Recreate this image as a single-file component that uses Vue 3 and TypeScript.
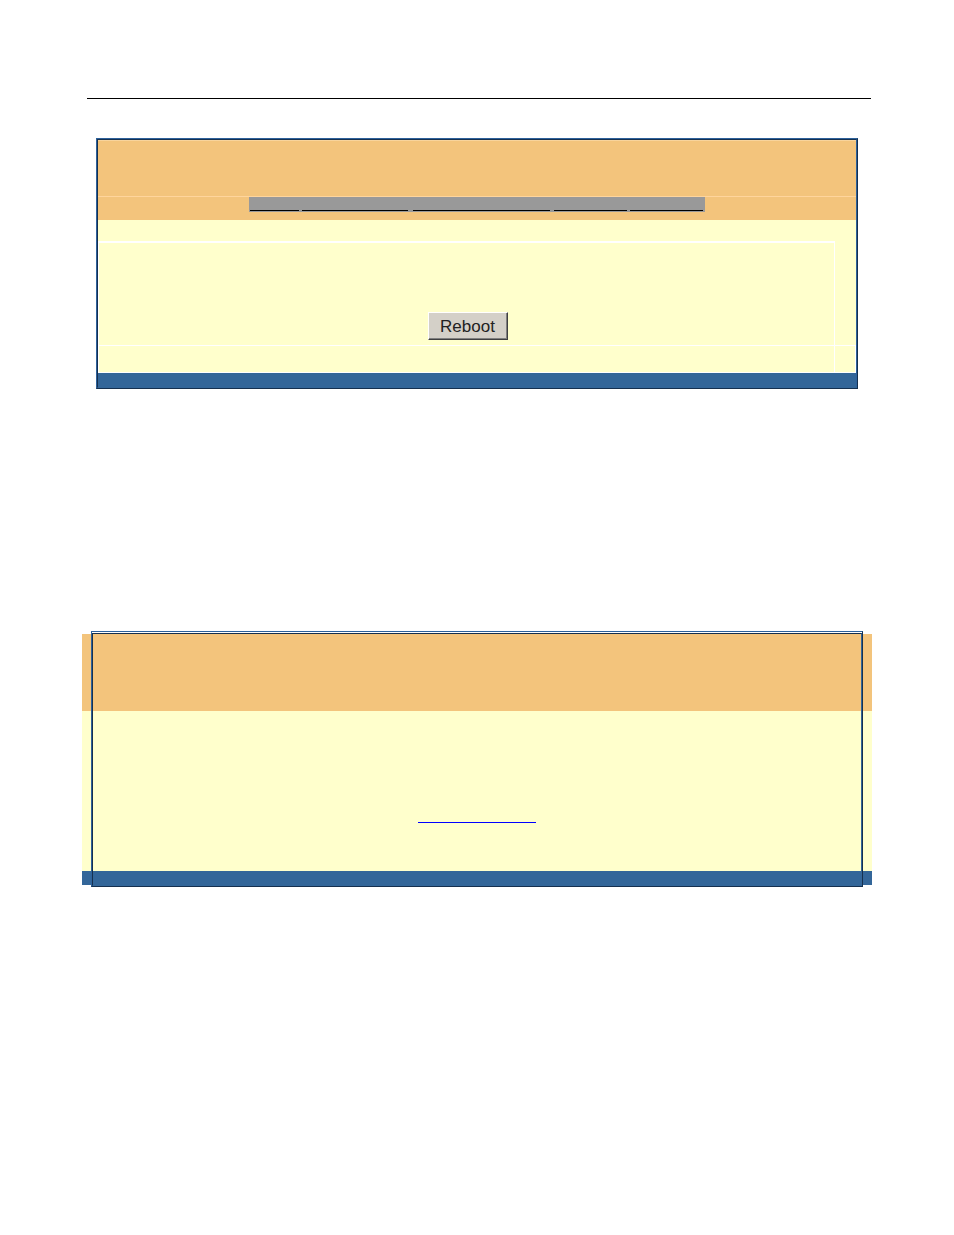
<script setup lang="ts">
interface NavItem {
  id: string
  width: number
  gap: number
}

const navItems: NavItem[] = [
  { id: 'nav-1', width: 49, gap: 3 },
  { id: 'nav-2', width: 106, gap: 5 },
  { id: 'nav-3', width: 137, gap: 4 },
  { id: 'nav-4', width: 73, gap: 3 },
  { id: 'nav-5', width: 73, gap: 0 },
]
</script>

<template>
  <main class="page">
    <hr class="rule" />

    <section class="panel">
      <div class="panel-inner">
        <header class="banner"></header>
        <div class="nav-band">
          <nav class="nav">
            <a
              v-for="item in navItems"
              :key="item.id"
              class="nav-link"
              href="#"
              :style="{ width: item.width + 'px', marginRight: item.gap + 'px' }"
            ></a>
          </nav>
        </div>
        <div class="spacer"></div>
        <div class="content">
          <div class="cell action">
            <button class="reboot" type="button">Reboot</button>
          </div>
          <div class="cell side"></div>
          <div class="cell low"></div>
          <div class="cell low side-low"></div>
        </div>
        <footer class="footer"></footer>
      </div>
    </section>

    <section class="message">
      <header class="message-top"></header>
      <div class="message-body">
        <a class="message-link" href="#"></a>
      </div>
      <footer class="message-foot"></footer>
      <div class="frame"></div>
    </section>
  </main>
</template>

<style>
body {
  background: #fff;
}
</style>

<style scoped>
.page {
  box-sizing: border-box;
  min-height: 100vh;
  padding: 98px 82px 40px;
  font-family: "Liberation Sans", Arial, sans-serif;
}

.rule {
  height: 1px;
  margin: 0 1px 39px 5px;
  border: 0;
  background: #000;
}

.panel {
  margin: 0 14px;
  border: 1px solid;
  border-color: #2d619b #15304f #15304f #2d619b;
}

.panel-inner {
  border: 1px solid;
  border-color: #15304f #2d619b #336699 #15304f;
}

.banner {
  height: 55px;
  border-top: 1px solid #f8d49c;
  background: #f3c47c;
}

.nav-band {
  display: flex;
  justify-content: center;
  align-items: flex-start;
  height: 23px;
  border-top: 1px solid #ffd59c;
  background: #f3c47c;
}

.nav {
  display: flex;
  box-sizing: border-box;
  height: 15px;
  padding: 0 2px 1px 1px;
  background: #999;
}

.nav-link {
  box-sizing: border-box;
  border-bottom: 1px solid #000;
}

.spacer {
  height: 21px;
  background: #ffffcc;
}

.content {
  display: grid;
  grid-template-columns: 1fr 22px;
  border-bottom: 1px solid #fff;
}

.cell {
  background: #ffffcc;
}

.action {
  display: flex;
  box-sizing: border-box;
  justify-content: center;
  height: 104px;
  padding: 69px 0 0 2px;
  border-top: 2px solid #fff;
  border-left: 1px solid #fff;
}

.side {
  border-left: 1px solid #fff;
}

.low {
  height: 26px;
  border-top: 1px solid #fff;
  border-left: 1px solid #fff;
}

.side-low {
  border-right: 1px solid #fff;
}

.footer {
  height: 14px;
  background: #336699;
}

.reboot {
  box-sizing: border-box;
  width: 80px;
  height: 28px;
  padding: 1px 0 0;
  border: 1px solid;
  border-color: #fff #404040 #404040 #fff;
  border-radius: 0;
  background: #d4d0c8;
  box-shadow: inset -1px -1px 0 #808080;
  color: #222;
  font: 17px/24px "Liberation Sans", Arial, sans-serif;
}

.message {
  position: relative;
  margin-top: 245px;
}

.message-top {
  height: 77px;
  background: #f3c47c;
}

.message-body {
  display: flex;
  justify-content: center;
  height: 160px;
  background: #ffffcc;
}

.message-link {
  box-sizing: border-box;
  width: 118px;
  height: 112px;
  border-bottom: 1px solid #00f;
}

.message-foot {
  height: 14px;
  background: #336699;
}

/* Double outline lying over the coloured bands */
.frame {
  position: absolute;
  inset: -3px 9px -2px;
  border: 1px solid;
  border-color: #2d619b #15304f #15304f #2d619b;
  pointer-events: none;
}

.frame::before {
  content: "";
  position: absolute;
  inset: 1px 0 0;
  border: 1px solid;
  border-color: #15304f #336699 #336699 #15304f;
}
</style>
